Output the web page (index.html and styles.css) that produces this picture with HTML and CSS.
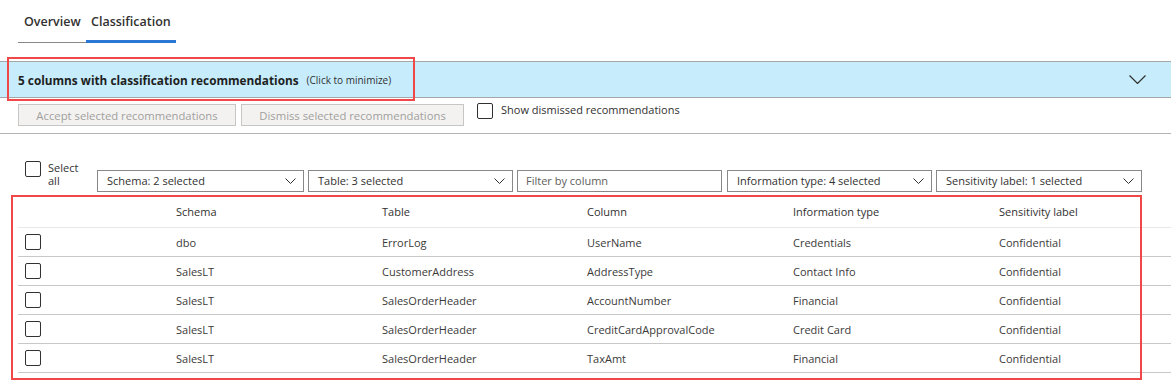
FILE: index.html
```html
<!DOCTYPE html>
<html>
<head>
<meta charset="utf-8">
<link rel="stylesheet" href="styles.css">
</head>
<body>
<nav class="tabs">
  <div class="tab">Overview</div>
  <div class="tab active">Classification</div>
</nav>

<section class="banner-wrap">
  <div class="banner">
    <span class="banner-title">5 columns with classification recommendations</span>
    <span class="banner-hint">(Click to minimize)</span>
    <svg class="banner-chevron" width="17" height="9" viewBox="0 0 17 9"><path d="M0.5 0.5 L8.5 8.5 L16.5 0.5" fill="none" stroke="#323130" stroke-width="1.2"/></svg>
  </div>
  <div class="highlight hl-banner"></div>
</section>

<div class="actions">
  <button class="btn btn-accept" disabled>Accept selected recommendations</button>
  <button class="btn btn-dismiss" disabled>Dismiss selected recommendations</button>
  <label class="check-label"><span class="checkbox"></span><span>Show dismissed recommendations</span></label>
</div>

<hr class="divider">

<div class="filters">
  <label class="select-all"><span class="checkbox"></span><span class="select-all-text">Select all</span></label>
  <div class="dropdowns">
    <div class="dropdown w207"><span>Schema: 2 selected</span><svg width="11" height="6" viewBox="0 0 11 6"><path d="M0.5 0.5 L5.5 5.5 L10.5 0.5" fill="none" stroke="#323130"/></svg></div>
    <div class="dropdown w205"><span>Table: 3 selected</span><svg width="11" height="6" viewBox="0 0 11 6"><path d="M0.5 0.5 L5.5 5.5 L10.5 0.5" fill="none" stroke="#323130"/></svg></div>
    <div class="dropdown w205 input"><span class="placeholder">Filter by column</span></div>
    <div class="dropdown w205 gap5"><span>Information type: 4 selected</span><svg width="11" height="6" viewBox="0 0 11 6"><path d="M0.5 0.5 L5.5 5.5 L10.5 0.5" fill="none" stroke="#323130"/></svg></div>
    <div class="dropdown w206"><span>Sensitivity label: 1 selected</span><svg width="11" height="6" viewBox="0 0 11 6"><path d="M0.5 0.5 L5.5 5.5 L10.5 0.5" fill="none" stroke="#323130"/></svg></div>
  </div>
</div>

<section class="table-wrap">
  <div class="grid header">
    <div></div><div>Schema</div><div>Table</div><div>Column</div><div>Information type</div><div>Sensitivity label</div>
  </div>
  <div class="grid row">
    <div><span class="checkbox"></span></div><div>dbo</div><div>ErrorLog</div><div>UserName</div><div>Credentials</div><div>Confidential</div>
  </div>
  <div class="grid row">
    <div><span class="checkbox"></span></div><div>SalesLT</div><div>CustomerAddress</div><div>AddressType</div><div>Contact Info</div><div>Confidential</div>
  </div>
  <div class="grid row">
    <div><span class="checkbox"></span></div><div>SalesLT</div><div>SalesOrderHeader</div><div>AccountNumber</div><div>Financial</div><div>Confidential</div>
  </div>
  <div class="grid row">
    <div><span class="checkbox"></span></div><div>SalesLT</div><div>SalesOrderHeader</div><div>CreditCardApprovalCode</div><div>Credit Card</div><div>Confidential</div>
  </div>
  <div class="grid row">
    <div><span class="checkbox"></span></div><div>SalesLT</div><div>SalesOrderHeader</div><div>TaxAmt</div><div>Financial</div><div>Confidential</div>
  </div>
  <div class="highlight hl-table"></div>
</section>
</body>
</html>
```
FILE: styles.css
```css
html, body {
  margin: 0;
  padding: 0;
  background: #ffffff;
}
body {
  width: 1171px;
  height: 385px;
  overflow: hidden;
  font-family: "Open Sans", "Liberation Sans", sans-serif;
  font-size: 11px;
  color: #323130;
}

/* Tabs */
.tabs {
  display: flex;
  align-items: flex-end;
  margin-left: 18px;
  height: 43px;
}
.tab {
  box-sizing: border-box;
  height: 43px;
  padding: 14px 0 12px 6px;
  line-height: 16px;
  font-size: 12.5px;
  font-weight: 600;
  color: #323130;
  width: 68px;
  border-bottom: 1px solid #8a8886;
  white-space: nowrap;
}
.tab.active {
  width: 90px;
  padding-left: 5px;
  padding-bottom: 10px;
  border-bottom: 3px solid #2b78d4;
}

/* Banner */
.banner-wrap {
  position: relative;
  margin-top: 18px;
}
.banner {
  box-sizing: border-box;
  height: 37px;
  background: #c7ecfc;
  border-top: 1px solid #a6a6a6;
  border-bottom: 1px solid #a6a6a6;
  display: flex;
  align-items: center;
  padding-left: 18px;
  padding-right: 25px;
}
.banner-title {
  font-weight: 700;
  font-size: 11.8px;
  color: #201f1e;
}
.banner-hint {
  font-size: 10px;
  margin-left: 8px;
  color: #323130;
}
.banner-chevron {
  margin-left: auto;
}

.highlight {
  position: absolute;
  box-sizing: border-box;
  border: 2px solid #f04848;
  pointer-events: none;
}
.hl-banner {
  left: 7px;
  top: -4px;
  width: 408px;
  height: 44px;
}

/* Actions */
.actions {
  display: flex;
  align-items: flex-start;
  margin-top: 6px;
  padding-left: 18px;
  gap: 5px;
}
.btn {
  box-sizing: border-box;
  height: 22px;
  background: #f3f2f1;
  border: 1px solid #c8c6c4;
  color: #a19f9d;
  font-family: inherit;
  font-size: 11.3px;
  padding: 0;
}
.btn-accept { width: 218px; }
.btn-dismiss { width: 223px; }
.check-label {
  display: flex;
  align-items: flex-start;
  gap: 8px;
  margin-left: 8px;
  margin-top: -1px;
  line-height: 14px;
}
.checkbox {
  display: inline-block;
  box-sizing: border-box;
  width: 16px;
  height: 16px;
  border: 1px solid #323130;
  border-radius: 2px;
  flex: none;
}

.divider {
  margin: 7px 0 0 0;
  border: none;
  border-top: 1px solid #b3b3b3;
  height: 0;
}

/* Filters */
.filters {
  display: flex;
  align-items: flex-start;
  margin-top: 27px;
  padding-left: 25px;
}
.select-all {
  display: flex;
  align-items: flex-start;
  gap: 7px;
  width: 72px;
}
.select-all-text {
  width: 30px;
  line-height: 13px;
  margin-top: 0;
}
.dropdowns {
  display: flex;
  gap: 4px;
  margin-top: 9px;
}
.dropdown {
  box-sizing: border-box;
  height: 22px;
  border: 1px solid #8a8886;
  display: flex;
  align-items: center;
  justify-content: space-between;
  padding: 0 7px 1px 9px;
  white-space: nowrap;
}
.dropdown.input { padding-left: 8px; }
.placeholder { color: #605e5c; }
.w205 { width: 205px; }
.w206 { width: 206px; }
.w207 { width: 207px; }
.gap5 { margin-left: 1px; }

/* Table */
.table-wrap {
  position: relative;
  margin-top: 3px;
  margin-left: 18px;
}
.grid {
  display: grid;
  grid-template-columns: 158px 206px 205px 206px 206px 1fr;
  align-items: center;
}
.header {
  height: 33px;
  box-sizing: border-box;
  border-bottom: 1px solid #e8e8e8;
  color: #323130;
}
.row {
  height: 29px;
  box-sizing: border-box;
  border-bottom: 1px solid #c8c8c8;
  color: #3b3a39;
}
.row .checkbox {
  margin-left: 7px;
  display: block;
}
.hl-table {
  left: -7px;
  top: 0;
  width: 1131px;
  height: 185px;
}
```
